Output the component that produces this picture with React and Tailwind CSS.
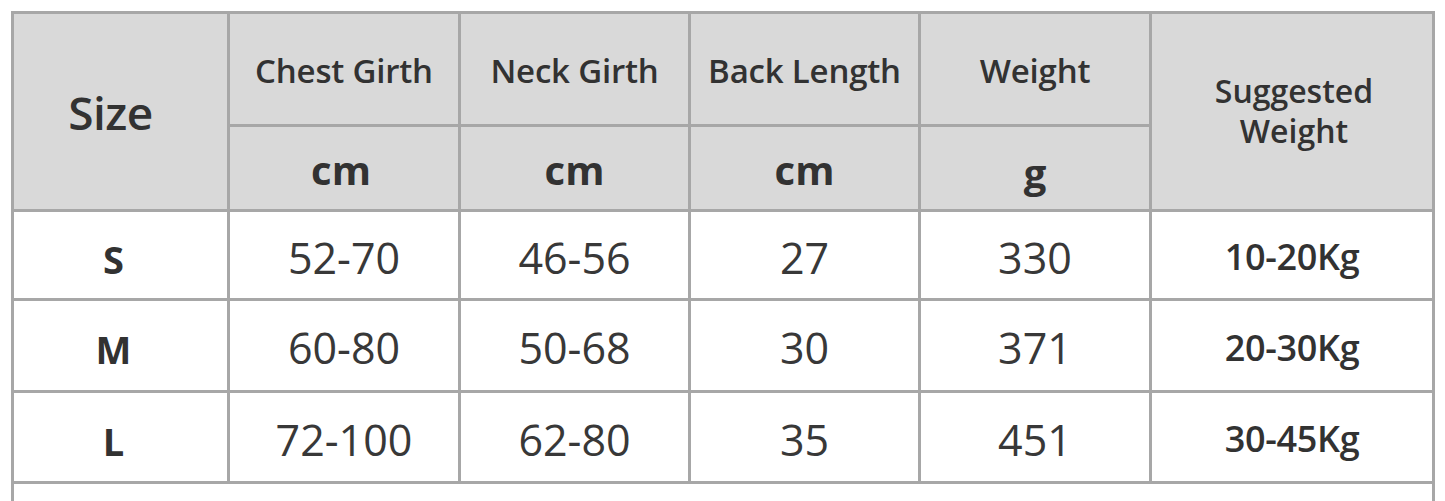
import React from "react";

const rows = [
  ["S", "52-70", "46-56", "27", "330", "10-20Kg"],
  ["M", "60-80", "50-68", "30", "371", "20-30Kg"],
  ["L", "72-100", "62-80", "35", "451", "30-45Kg"],
];

export default function App() {
  const font = { fontFamily: '"Open Sans", "Noto Sans", sans-serif' };
  return (
    <div className="w-[1445px] h-[501px] overflow-hidden bg-white pl-[11px] pt-[11px]" style={font}>
      <div className="w-[1424px] grid grid-cols-[213px_228px_227px_227px_228px_280px] grid-rows-[110px_82px_86px_89px_88px_60px] gap-[3px] p-[3px] bg-[#a7a7a7] text-[#323232]">
        <div className="row-span-2 bg-[#d9d9d9] flex items-center justify-center pr-[20px] pt-[2px] text-[46px] font-semibold tracking-[-0.5px]">
          Size
        </div>
        <div className="bg-[#d9d9d9] flex items-center justify-center pt-[4px] text-[33px] font-semibold tracking-[-0.2px]">Chest Girth</div>
        <div className="bg-[#d9d9d9] flex items-center justify-center pt-[4px] text-[33px] font-semibold tracking-[-0.2px]">Neck Girth</div>
        <div className="bg-[#d9d9d9] flex items-center justify-center pt-[4px] text-[33px] font-semibold tracking-[-0.2px]">Back Length</div>
        <div className="bg-[#d9d9d9] flex items-center justify-center pt-[4px] text-[33px] font-semibold tracking-[-0.2px]">Weight</div>
        <div className="row-span-2 bg-[#d9d9d9] flex flex-col items-center justify-center pb-[2px] pl-[4px] text-[32px] font-semibold leading-[40px]">
          <span>Suggested</span>
          <span>Weight</span>
        </div>
        <div className="bg-[#d9d9d9] flex items-center justify-center pt-[4px] pr-[6px] text-[40px] font-bold">cm</div>
        <div className="bg-[#d9d9d9] flex items-center justify-center pt-[4px] text-[40px] font-bold">cm</div>
        <div className="bg-[#d9d9d9] flex items-center justify-center pt-[4px] text-[40px] font-bold">cm</div>
        <div className="bg-[#d9d9d9] flex items-center justify-center pt-[10px] text-[40px] font-bold">g</div>
        {rows.map((r) => (
          <React.Fragment key={r[0]}>
            <div className="bg-white flex items-center justify-center text-[38px] font-bold pt-[8px] pr-[14px]">{r[0]}</div>
            <div className="bg-white flex items-center justify-center text-[43px] font-normal text-[#383838] pt-[6px]">{r[1]}</div>
            <div className="bg-white flex items-center justify-center text-[43px] font-normal text-[#383838] pt-[6px]">{r[2]}</div>
            <div className="bg-white flex items-center justify-center text-[43px] font-normal text-[#383838] pt-[6px]">{r[3]}</div>
            <div className="bg-white flex items-center justify-center text-[43px] font-normal text-[#383838] pt-[6px]">{r[4]}</div>
            <div className="bg-white flex items-center justify-center text-[36px] font-semibold pt-[4px] tracking-[-0.3px]">{r[5]}</div>
          </React.Fragment>
        ))}
        <div className="col-span-6 bg-white" />
      </div>
    </div>
  );
}
